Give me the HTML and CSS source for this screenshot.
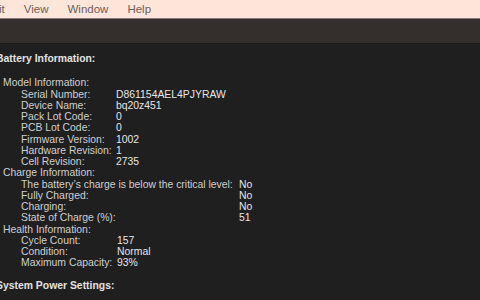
FILE: index.html
```html
<!DOCTYPE html>
<html lang="en">
<head>
    <meta charset="UTF-8">
    <title>System Information</title>
    <link rel="stylesheet" href="styles.css">
</head>
<body>
    <div class="menu-bar">
        <span class="menu-item first">it</span>
        <span class="menu-item">View</span>
        <span class="menu-item">Window</span>
        <span class="menu-item">Help</span>
    </div>
    <div class="toolbar"></div>
    <div class="report">
        <div class="heading">Battery Information:</div>

        <div class="group">
            <div class="group-title">Model Information:</div>
            <div class="rows model">
                <span>Serial Number:</span><span class="val">D861154AEL4PJYRAW</span>
                <span>Device Name:</span><span class="val">bq20z451</span>
                <span>Pack Lot Code:</span><span class="val">0</span>
                <span>PCB Lot Code:</span><span class="val">0</span>
                <span>Firmware Version:</span><span class="val">1002</span>
                <span>Hardware Revision:</span><span class="val">1</span>
                <span>Cell Revision:</span><span class="val">2735</span>
            </div>
        </div>

        <div class="group">
            <div class="group-title">Charge Information:</div>
            <div class="rows charge">
                <span>The battery’s charge is below the critical level:</span><span class="val">No</span>
                <span>Fully Charged:</span><span class="val">No</span>
                <span>Charging:</span><span class="val">No</span>
                <span>State of Charge (%):</span><span class="val">51</span>
            </div>
        </div>

        <div class="group">
            <div class="group-title">Health Information:</div>
            <div class="rows health">
                <span>Cycle Count:</span><span class="val">157</span>
                <span>Condition:</span><span class="val">Normal</span>
                <span>Maximum Capacity:</span><span class="val">93%</span>
            </div>
        </div>

        <div class="heading next">System Power Settings:</div>
    </div>
</body>
</html>
```

FILE: styles.css
```css
body {
    margin: 0;
    padding: 0;
    height: 300px;
    overflow: hidden;
    background: #1f1f1f;
    font-family: "Liberation Sans", Arial, sans-serif;
}
.menu-bar {
    height: 18px;
    display: flex;
    align-items: center;
    gap: 19px;
    background: #fde5d9;
    border-bottom: 1px solid #8c7a73;
    font-size: 11.5px;
    color: #6e5e57;
}
.menu-item.first {
    margin-left: -1px;
}
.toolbar {
    height: 24px;
    background: #342e2d;
    border-bottom: 1px solid #191717;
}
.report {
    margin-left: -4px;
    padding-top: 9px;
    font-size: 10.4px;
    line-height: 11.25px;
    color: #cfcfcf;
}
.heading {
    font-weight: bold;
    color: #e2e2e2;
    margin-bottom: 13px;
}
.heading.next {
    margin-top: 11px;
}
.group-title {
    padding-left: 7px;
}
.rows {
    display: grid;
    padding-left: 25px;
}
.rows.model {
    grid-template-columns: 95px auto;
}
.rows.charge {
    grid-template-columns: 218px auto;
}
.rows.health {
    grid-template-columns: 96px auto;
}
.val {
    color: #e6e6e6;
}
```
